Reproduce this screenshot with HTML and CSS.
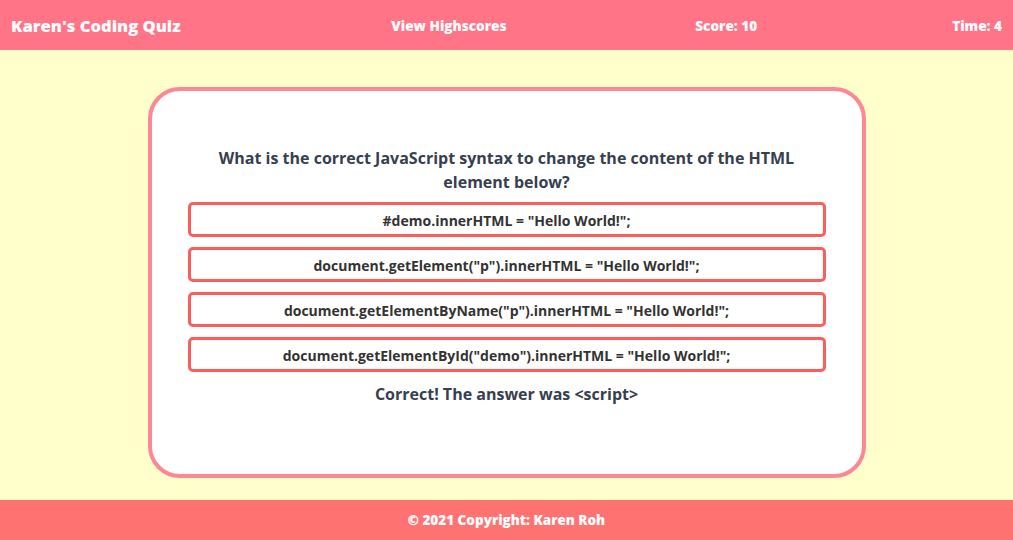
FILE: index.html
```html
<!DOCTYPE html>
<html lang="en">
<head>
<meta charset="utf-8">
<title>Karen's Coding Quiz</title>
<link rel="stylesheet" href="styles.css">
</head>
<body>
<header class="topbar">
  <div class="brand">Karen's Coding Quiz</div>
  <div class="nav-item">View Highscores</div>
  <div class="nav-item nav-score">Score: 10</div>
  <div class="nav-item">Time: 4</div>
</header>
<main class="main">
  <section class="card">
    <h2 class="question">What is the correct JavaScript syntax to change the content of the HTML element below?</h2>
    <div class="choices">
      <button class="choice">#demo.innerHTML = "Hello World!";</button>
      <button class="choice">document.getElement("p").innerHTML = "Hello World!";</button>
      <button class="choice">document.getElementByName("p").innerHTML = "Hello World!";</button>
      <button class="choice">document.getElementById("demo").innerHTML = "Hello World!";</button>
    </div>
    <p class="feedback">Correct! The answer was &lt;script&gt;</p>
  </section>
</main>
<footer class="footer">© 2021 Copyright: Karen Roh</footer>
</body>
</html>
```

FILE: styles.css
```css
* { box-sizing: border-box; }
html, body { margin: 0; padding: 0; }
body {
  height: 540px;
  display: flex;
  flex-direction: column;
  background: #ffffcc;
  font-family: "Open Sans", "Noto Sans", sans-serif;
  font-weight: 700;
  color: #36404f;
}
.topbar {
  height: 50px;
  flex: none;
  background: #ff7587;
  color: #fff;
  display: grid;
  grid-template-columns: 1fr 1fr 1fr 1fr;
  align-items: center;
  padding: 0 11px;
}
.brand { font-size: 16.6px; font-weight: 800; }
.nav-item { font-size: 13.6px; text-align: right; font-weight: 800; }
.nav-score { padding-right: 0; margin-right: -3px; }
.main {
  flex: 1;
  display: flex;
  justify-content: center;
  padding-top: 37px;
}
.card {
  width: 718px;
  height: 391px;
  background: #fff;
  border: 4px solid #ff8795;
  border-radius: 32px;
  padding: 55px 36px 0;
  display: flex;
  flex-direction: column;
  align-items: center;
}
.question {
  margin: 0 0 8px;
  font-size: 16px;
  font-weight: 700;
  line-height: 24px;
  text-align: center;
  max-width: 600px;
  color: #36404f;
}
.choices {
  width: 100%;
  display: flex;
  flex-direction: column;
  gap: 10px;
}
.choice {
  height: 35px;
  width: 100%;
  background: #fff;
  border: 3px solid #ff5c5c;
  border-radius: 5px;
  font-family: inherit;
  font-weight: 700;
  font-size: 14px;
  color: #333;
  padding-top: 2px;
}
.feedback {
  margin: 12px 0 0;
  font-size: 16px;
  line-height: 20px;
  color: #36404f;
}
.footer {
  height: 40px;
  flex: none;
  background: #ff7272;
  color: #fff;
  font-size: 13.5px;
  font-weight: 800;
  display: flex;
  align-items: center;
  justify-content: center;
}
```
